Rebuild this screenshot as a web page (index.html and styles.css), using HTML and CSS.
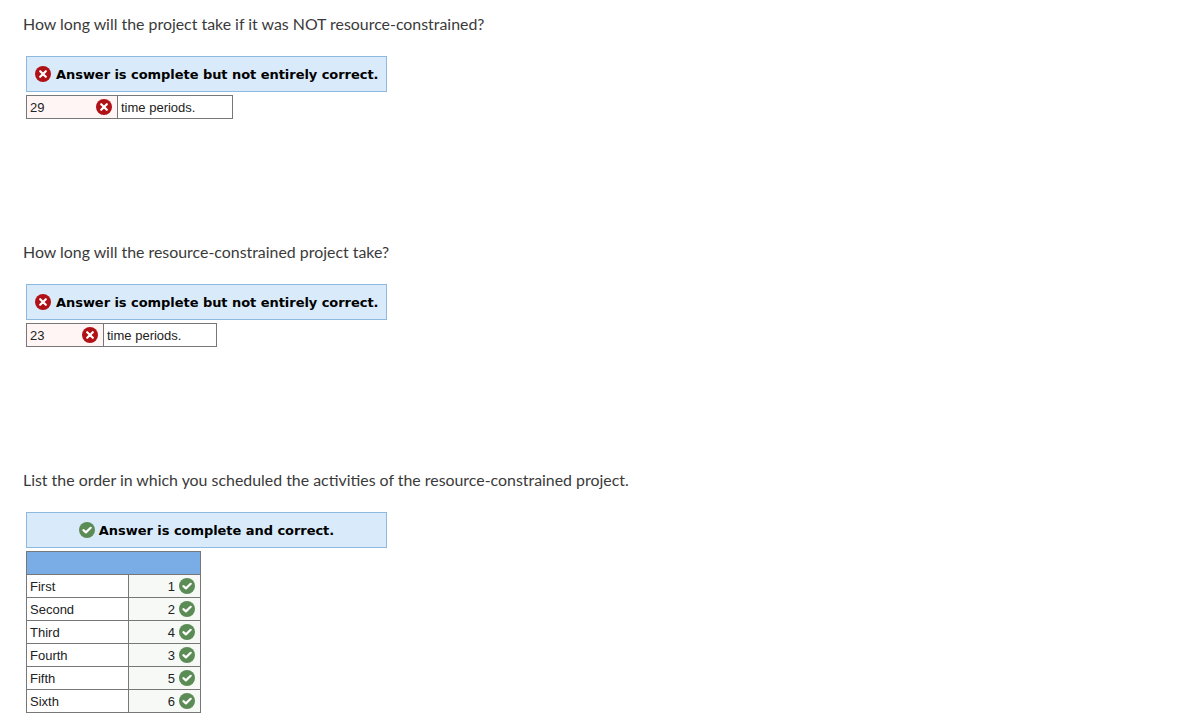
FILE: index.html
```html
<!DOCTYPE html>
<html lang="en">
<head>
    <meta charset="UTF-8">
    <title>Resource-constrained project</title>
    <link rel="stylesheet" href="styles.css">
</head>
<body>
    <svg class="icon-defs" width="0" height="0">
        <symbol id="icon-wrong" viewBox="0 0 16 16">
            <circle cx="8" cy="8" r="8" fill="#b01116"/>
            <path d="M5.2 5.2l5.6 5.6M10.8 5.2l-5.6 5.6" stroke="#fff" stroke-width="2.2" stroke-linecap="round" fill="none"/>
        </symbol>
        <symbol id="icon-right" viewBox="0 0 16 16">
            <circle cx="8" cy="8" r="8" fill="#5b8c55"/>
            <path d="M4.4 8.2l2.5 2.2 4.8-4.6" stroke="#fff" stroke-width="2.2" stroke-linecap="round" stroke-linejoin="round" fill="none"/>
        </symbol>
    </svg>

    <section class="question">
        <p class="question-text">How long will the project take if it was NOT resource-constrained?</p>
        <div class="banner">
            <svg class="icon"><use href="#icon-wrong"/></svg>
            <span>Answer is complete but not entirely correct.</span>
        </div>
        <table class="answer">
            <tr>
                <td class="cell-wrong cell-wide"><div class="cell-inner"><span>29</span><svg class="icon"><use href="#icon-wrong"/></svg></div></td>
                <td class="cell-unit unit-wide">time periods.</td>
            </tr>
        </table>
    </section>

    <section class="question">
        <p class="question-text">How long will the resource-constrained project take?</p>
        <div class="banner">
            <svg class="icon"><use href="#icon-wrong"/></svg>
            <span>Answer is complete but not entirely correct.</span>
        </div>
        <table class="answer">
            <tr>
                <td class="cell-wrong cell-narrow"><div class="cell-inner"><span>23</span><svg class="icon"><use href="#icon-wrong"/></svg></div></td>
                <td class="cell-unit unit-narrow">time periods.</td>
            </tr>
        </table>
    </section>

    <section class="question question-last">
        <p class="question-text">List the order in which you scheduled the activities of the resource-constrained project.</p>
        <div class="banner banner-center">
            <svg class="icon"><use href="#icon-right"/></svg>
            <span>Answer is complete and correct.</span>
        </div>
        <table class="answer order">
            <tr><th colspan="2"></th></tr>
            <tr><td class="order-label">First</td><td class="cell-right"><div class="cell-inner cell-end"><span>1</span><svg class="icon"><use href="#icon-right"/></svg></div></td></tr>
            <tr><td class="order-label">Second</td><td class="cell-right"><div class="cell-inner cell-end"><span>2</span><svg class="icon"><use href="#icon-right"/></svg></div></td></tr>
            <tr><td class="order-label">Third</td><td class="cell-right"><div class="cell-inner cell-end"><span>4</span><svg class="icon"><use href="#icon-right"/></svg></div></td></tr>
            <tr><td class="order-label">Fourth</td><td class="cell-right"><div class="cell-inner cell-end"><span>3</span><svg class="icon"><use href="#icon-right"/></svg></div></td></tr>
            <tr><td class="order-label">Fifth</td><td class="cell-right"><div class="cell-inner cell-end"><span>5</span><svg class="icon"><use href="#icon-right"/></svg></div></td></tr>
            <tr><td class="order-label">Sixth</td><td class="cell-right"><div class="cell-inner cell-end"><span>6</span><svg class="icon"><use href="#icon-right"/></svg></div></td></tr>
        </table>
    </section>
</body>
</html>
```

FILE: styles.css
```css
html, body {
    height: 100%;
}

body {
    box-sizing: border-box;
    margin: 0;
    padding: 14px 0 0 23px;
    background: #fff;
    font-family: "Lato", Arial, sans-serif;
    color: #3a3a3a;
}

.icon-defs {
    position: absolute;
}

.question {
    height: 228px;
}

.question-last {
    height: auto;
}

.question-text {
    margin: 0;
    font-size: 15.9px;
    line-height: 20px;
}

.icon {
    display: block;
    flex: none;
    width: 16px;
    height: 16px;
}

.banner {
    display: flex;
    align-items: center;
    gap: 5px;
    box-sizing: border-box;
    width: 361px;
    height: 36px;
    margin: 22px 0 3px 3px;
    padding-left: 8px;
    background: #d9ebfa;
    border: 1px solid #8db8e0;
    font-family: "DejaVu Sans", Verdana, sans-serif;
    font-size: 13px;
    letter-spacing: -0.05px;
    font-weight: bold;
    color: #000;
    white-space: nowrap;
}

.banner-center {
    justify-content: center;
    gap: 4px;
    padding-left: 0;
}

.answer {
    margin-left: 3px;
    border-collapse: collapse;
    font-family: "Liberation Sans", Arial, sans-serif;
    font-size: 13px;
    color: #222;
}

.answer td,
.answer th {
    box-sizing: border-box;
    height: 23px;
    padding: 0 3px;
    border: 1px solid #777;
}

.cell-inner {
    display: flex;
    align-items: center;
    justify-content: space-between;
}

.cell-end {
    justify-content: flex-end;
    gap: 4px;
}

.answer .cell-wrong {
    background: #fff5f4;
    padding-right: 5px;
}

.answer .cell-right {
    width: 72px;
    background: #f6f9f6;
    padding-right: 5px;
}

.cell-wide {
    width: 91px;
}

.cell-narrow {
    width: 77px;
}

.unit-wide {
    width: 115px;
}

.unit-narrow {
    width: 113px;
}

.order th {
    background: #7aade6;
}

.order-label {
    width: 102px;
}
```
